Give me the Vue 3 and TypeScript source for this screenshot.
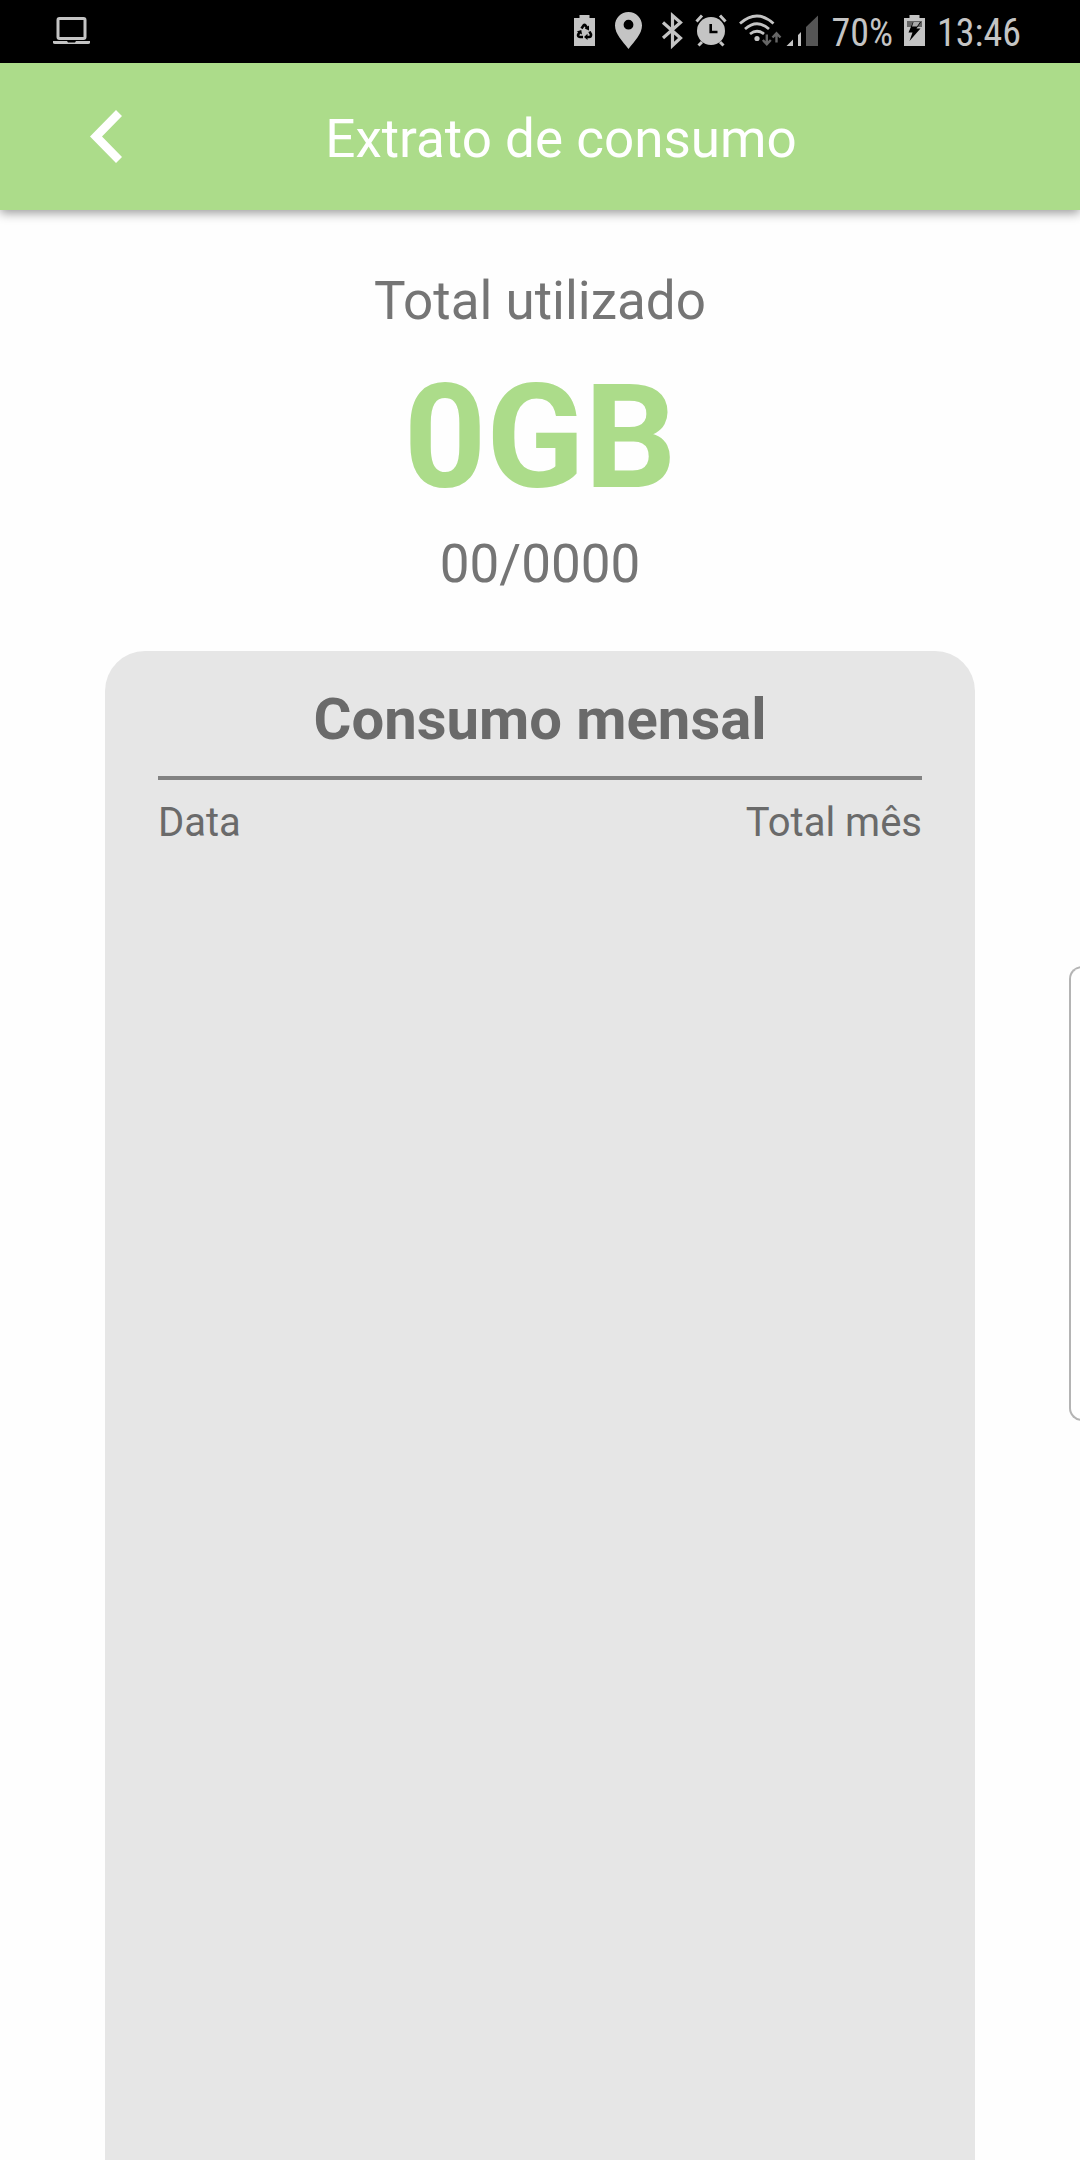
<script setup lang="ts">
import { ref } from 'vue'

interface MonthUsage {
  date: string
  total: string
}

const total = ref('0GB')
const period = ref('00/0000')
const months = ref<MonthUsage[]>([])
</script>

<template>
  <div class="screen">
    <div class="status">
      <svg width="44" height="63" viewBox="0 0 44 63" aria-hidden="true">
        <rect x="8" y="18.500" width="27" height="20" rx="1.500" fill="none" stroke="#c4c4c4" stroke-width="3" />
        <path d="M3 41H40V42.500Q40 44 38 44H5Q3 44 3 42.500Z" fill="#c4c4c4" />
        <path d="M17 41H26L25 42.500H18Z" fill="#000" />
      </svg>
      <div class="status-right">
        <svg width="41" height="63" viewBox="0 0 41 63" aria-hidden="true">
          <path d="M10 18H15.500V15H25.500V18H31V46H10Z" fill="#c4c4c4" />
          <g fill="none" stroke="#000" stroke-width="2.600">
            <path d="M17.500 28.500L19.500 25.500Q20.500 24.500 21.500 25.500L23.500 28.500" />
            <path d="M25.500 31.500L27 34.500Q27.300 37 25 37H22" />
            <path d="M19 37H16Q13.500 36.800 14.200 34.500L16 31.500" />
          </g>
          <path d="M25 25.500V30.500L20.800 28.500ZM23.500 33.800V40L20 37ZM12.800 31.500L17.300 30L18 34.500Z" fill="#000" />
        </svg>
        <svg width="47" height="63" viewBox="0 0 47 63" aria-hidden="true">
          <path d="M23.500 12C16 12 10 18 10 25.500C10 34 17.500 41 23.500 49C29.500 41 37 34 37 25.500C37 18 31 12 23.500 12ZM23.500 19.800A4.900 4.900 0 1 1 23.500 29.600A4.900 4.900 0 1 1 23.500 19.800Z" fill="#c4c4c4" />
        </svg>
        <svg width="40" height="63" viewBox="0 0 40 63" aria-hidden="true">
          <path d="M11 22.500L28.500 38L20.500 45.500V15.500L28.500 22.500L11 38" fill="none" stroke="#c4c4c4" stroke-width="3.200" />
        </svg>
        <svg width="40" height="63" viewBox="0 0 40 63" aria-hidden="true">
          <circle cx="19" cy="31" r="14" fill="#c4c4c4" />
          <path d="M4.500 21.500L10 15.500M33.500 21.500L28 15.500M6.500 45.500L10 42M31.500 45.500L28 42" stroke="#c4c4c4" stroke-width="3" />
          <path d="M18.700 24V32H25.500" fill="none" stroke="#000" stroke-width="2.600" />
        </svg>
        <svg width="52" height="63" viewBox="0 0 52 63" aria-hidden="true">
          <g fill="none" stroke="#c4c4c4" stroke-width="2.800">
            <path d="M8 23.500Q25 8.500 41.500 23.500" />
            <path d="M13 29Q25 18.500 37 29" />
            <path d="M18 34Q25 28.500 32 34" />
          </g>
          <circle cx="25" cy="38.500" r="2.600" fill="#c4c4c4" />
          <path d="M34.800 34.500V44M30.800 40L34.800 44.200L38.800 40M44.500 42.500V33.500M40.500 37.500L44.500 33.300L48.500 37.500" fill="none" stroke="#666" stroke-width="2.400" />
        </svg>
        <svg width="48" height="63" viewBox="0 0 48 63" aria-hidden="true">
          <path d="M2.500 46L9 39.500V46ZM14 46V35L17 32V46Z" fill="#c4c4c4" />
          <path d="M22 46V27L34 15.500V46Z" fill="#555" />
        </svg>
        <span class="status-text">70%</span>
        <svg width="44" height="63" viewBox="0 0 44 63" aria-hidden="true">
          <path d="M11 18H16.500V15H26.500V18H32V46H11Z" fill="#c4c4c4" />
          <path d="M14 21H29V27H14Z" fill="#666" />
          <path d="M20 22H28L23.500 28.500H27.500L16.500 41L19.500 32.500H15.500Z" fill="#000" />
          <path d="M20.500 22H27L24 26.500H19Z" fill="#aaa" />
        </svg>
        <span class="status-text">13:46</span>
      </div>
    </div>

    <header class="appbar">
      <button class="back" type="button" aria-label="Voltar">
        <svg width="32" height="53" viewBox="0 0 32 53" aria-hidden="true">
          <path d="M26 0L32 6L12 26.500L32 47L26 53L0 26.500Z" fill="#fff" />
        </svg>
      </button>
      <h1 class="title">Extrato de consumo</h1>
    </header>

    <main class="content">
      <section class="summary">
        <p class="label">Total utilizado</p>
        <p class="amount">{{ total }}</p>
        <p class="label">{{ period }}</p>
      </section>

      <section class="card">
        <h2 id="monthly" class="card-title">Consumo mensal</h2>
        <table class="months" aria-labelledby="monthly">
          <thead>
            <tr>
              <th scope="col">Data</th>
              <th scope="col">Total mês</th>
            </tr>
          </thead>
          <tbody>
            <tr v-for="month in months" :key="month.date">
              <td>{{ month.date }}</td>
              <td>{{ month.total }}</td>
            </tr>
          </tbody>
        </table>
      </section>
    </main>

    <div class="edge-handle"></div>
  </div>
</template>

<style>
body {
  margin: 0;
  background: #fff;
}
</style>

<style scoped>
.screen {
  position: relative;
  display: flex;
  flex-direction: column;
  min-height: 100vh;
  overflow: hidden;
  background: #fefefe;
  font-family: Roboto, "Noto Sans", sans-serif;
}

svg {
  display: block;
  flex: none;
}

.status {
  display: flex;
  justify-content: space-between;
  height: 63px;
  padding: 0 59px 0 50px;
  background: #000;
  color: #c4c4c4;
}

.status-right {
  display: flex;
  align-items: center;
}

.status-text {
  padding-top: 3px;
  font-family: "Roboto Condensed", Roboto, sans-serif;
  font-size: 38px;
  line-height: 46px;
}

.appbar {
  position: relative;
  display: flex;
  align-items: center;
  height: 147px;
  padding: 0 91px 0 79px;
  background: #acdc8a;
  box-shadow: 0 3px 10px rgba(0, 0, 0, 0.4);
}

.back {
  display: flex;
  align-items: center;
  justify-content: center;
  width: 54px;
  height: 96px;
  padding: 0;
  border: 0;
  background: none;
}

.title {
  flex: 1;
  margin: 0;
  padding-top: 4px;
  color: #fff;
  font-size: 53px;
  font-weight: 400;
  line-height: 64px;
  text-align: center;
}

.content {
  display: flex;
  flex: 1;
  flex-direction: column;
  padding: 59px 105px 0;
}

.summary {
  text-align: center;
}

.label {
  margin: 0;
  color: #757575;
  font-size: 53px;
  line-height: 64px;
}

.amount {
  margin: 21px 0 10px;
  color: #acdc8a;
  font-size: 144px;
  font-weight: 700;
  line-height: 168px;
}

.card {
  flex: 1;
  margin-top: 55px;
  padding: 33px 53px;
  border-radius: 40px 40px 0 0;
  background: #e6e6e6;
  color: #6a6a6a;
}

.card-title {
  margin: 0;
  padding-bottom: 22px;
  border-bottom: 4px solid #828282;
  font-size: 58px;
  font-weight: 700;
  line-height: 70px;
  text-align: center;
}

.months {
  width: 100%;
  margin-top: 19px;
  border-collapse: collapse;
  font-size: 40px;
  line-height: 48px;
}

.months th,
.months td {
  padding: 0;
  font-weight: 400;
  text-align: left;
}

.months th:last-child,
.months td:last-child {
  text-align: right;
}

.edge-handle {
  position: absolute;
  top: 966px;
  right: -2px;
  box-sizing: border-box;
  width: 13px;
  height: 455px;
  border: 2px solid #b4b4b4;
  border-right: 0;
  border-radius: 14px 0 0 14px;
  background: #fff;
}
</style>
